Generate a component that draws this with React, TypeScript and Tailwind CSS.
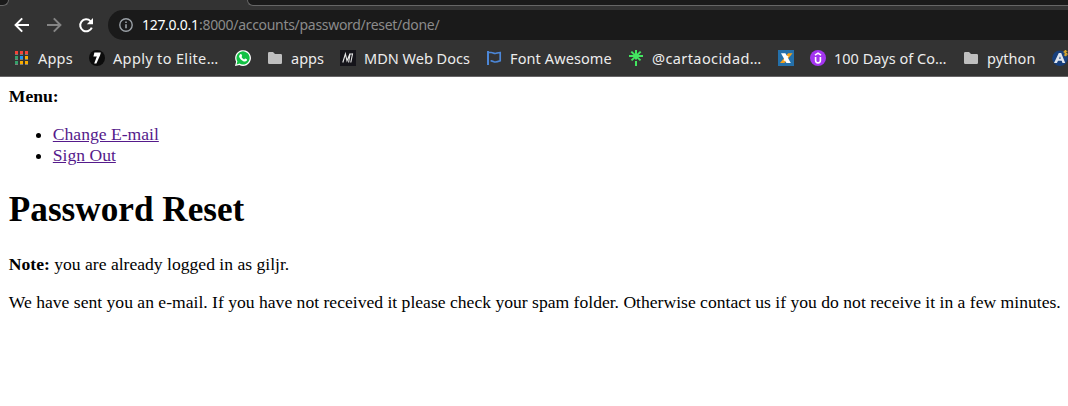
import type { ReactNode } from "react";

function Apps() {
  const colors = [
    ["#f44336", "#f44336", "#f44336"],
    ["#34a06a", "#2196f3", "#f9ab00"],
    ["#34a06a", "#f9ab00", "#f9ab00"],
  ];
  return (
    <svg className="block h-4 w-4" viewBox="0 0 16 16" shapeRendering="crispEdges">
      {colors.map((row, r) =>
        row.map((c, i) => (
          <g key={`${r}-${i}`}>
            <rect x={1 + i * 5} y={1 + r * 5} width="3" height="3" fill={c} />
            <rect x={1 + i * 5} y={4 + r * 5} width="3" height="1" fill="#9a9a9a" opacity="0.7" />
          </g>
        )),
      )}
    </svg>
  );
}

function Folder() {
  return (
    <svg className="block h-4 w-4" viewBox="0 0 16 16">
      <path d="M1 3.2Q1 2 2.2 2H6l2 2h5.8Q15 4 15 5.2v7.6q0 1.2-1.2 1.2H2.2Q1 14 1 12.8z" fill="#bfbfbf" />
    </svg>
  );
}

function Toptal() {
  return (
    <svg className="block h-4 w-4" viewBox="0 0 16 16">
      <circle cx="8" cy="8" r="8" fill="#0c0c0c" />
      <path d="M5.4 2.6h6.4L11 5.6 7.4 13.6H5.2l2.6-7H4.4z" fill="#fff" />
    </svg>
  );
}

function WhatsApp() {
  return (
    <svg className="block h-4 w-4" viewBox="0 0 16 16">
      <path d="M0 16l1.1-4.2A7.9 7.9 0 1 1 4.3 15z" fill="#fff" />
      <path d="M1.6 14.4l.8-3A6.6 6.6 0 1 1 4.6 13.6z" fill="#12c144" />
      <path d="M5.3 4.2c.5-.4 1-.2 1.2.2l.6 1.4c.1.3-.1.7-.6 1.2.7 1.2 1.5 1.9 2.7 2.4.6-.7.8-1 1.2-.8l1.4.7c.4.2.2 1-.1 1.5-.6.8-1.8 1-2.9.6-2.4-.9-3.9-2.5-4.6-4.4-.3-1 .3-2.2 1.1-2.8z" fill="#fff" />
    </svg>
  );
}

function Mdn() {
  return (
    <svg className="block h-4 w-4" viewBox="0 0 16 16">
      <rect width="16" height="16" fill="#15141a" />
      <path d="M2.8 12.5L5.4 3.8 7 10.8 10 3.8 8.6 12.5M12.6 3.5L10.8 12.5" fill="none" stroke="#e8e8e8" strokeWidth="1.1" />
      <path d="M9.6 4h3" stroke="#e8e8e8" strokeWidth="1" />
    </svg>
  );
}

function Flag() {
  return (
    <svg className="block h-4 w-4" viewBox="0 0 16 16" fill="none" stroke="#4c87d8">
      <path d="M2 1v14" strokeWidth="2" />
      <path d="M2 2.5h3.2c1.8 0 2.2 1 4 1 1.7 0 2.5-1 5-1v8.3c-2 .8-3 1.2-4.8 1.2-1.8 0-2.4-1.2-4.2-1.2H4.6" strokeWidth="1.7" />
    </svg>
  );
}

function Linktree() {
  return (
    <svg className="block h-4 w-4" viewBox="0 0 16 16">
      <path d="M8 0v9.5M1 6h14M3.3 1.6l9.2 8.8M12.7 1.6l-9.2 8.8M8 11v5" fill="none" stroke="#43e660" strokeWidth="2" />
    </svg>
  );
}

function CrossMark() {
  return (
    <svg className="block h-4 w-4" viewBox="0 0 16 16">
      <rect width="16" height="16" fill="#2470aa" />
      <path d="M10.2 3.2h4.4L6.4 13H2z" fill="#f5a11c" />
      <path d="M3 3.2h4.4l5.4 9.8H8.4z" fill="#fff" />
      <path d="M7.4 6.2l3.4-.2-4.4 5.1-.8-.3z" fill="#fff" />
    </svg>
  );
}

function Udemy() {
  return (
    <svg className="block h-4 w-4" viewBox="0 0 16 16">
      <circle cx="8" cy="8" r="8" fill="#a435f0" />
      <path d="M5 5.2L8 3.2l3 2M5.6 6.9v3.7q0 2.3 2.4 2.3t2.4-2.3V6.9" fill="none" stroke="#fff" strokeWidth="1.6" />
    </svg>
  );
}

function Coin() {
  return (
    <svg className="block h-4 w-4" viewBox="0 0 16 16">
      <circle cx="8" cy="8.2" r="7.8" fill="#173f7c" />
      <path d="M2 13L6.8 3h2.4l4 10h-2.7l-.8-2.2H6L4.9 13z" fill="#dfe5ee" />
      <path d="M7 8.7l1-2.5.8 2.5z" fill="#173f7c" />
      <path d="M15.3 1.5c-2-.9-3.5-.3-3.2.8.3 1.1 2.7.6 3 1.8.2 1.1-1.5 1.6-3.1.7M13.6 0v6.3" fill="none" stroke="#d8a52c" strokeWidth="1.1" />
    </svg>
  );
}

function Bookmark({ icon, label, text }: { icon: ReactNode; label?: string; text?: string }) {
  return (
    <div className="flex shrink-0 items-center gap-2">
      <span className="h-4 w-4 shrink-0">{icon}</span>
      {label && <span className={`mb-px h-5 shrink-0 leading-5 whitespace-nowrap ${text}`}>{label}</span>}
    </div>
  );
}

function Toolbar() {
  return (
    <div className="flex h-[35px] items-start pt-1">
      <div className="flex h-[30px] w-[108px] shrink-0 items-center pl-[14px]">
        <svg className="h-4 w-4" viewBox="0 0 16 16" fill="none" stroke="#fff" strokeWidth="2">
          <path d="M15 8H2.4M8.2 1.4L1.6 8l6.6 6.6" />
        </svg>
        <svg className="ml-4 h-4 w-4" viewBox="0 0 16 16" fill="none" stroke="#858585" strokeWidth="2">
          <path d="M1 8h12.6M7.8 1.4L14.4 8l-6.6 6.6" />
        </svg>
        <svg className="ml-4 h-4 w-4" viewBox="0 0 16 16">
          <path d="M13.8 10.6A6 6 0 1 1 12.5 4.1" fill="none" stroke="#fff" strokeWidth="2" />
          <path d="M15 1v6.2H8.8z" fill="#fff" />
        </svg>
      </div>
      <div className="flex h-[30px] flex-1 items-center rounded-l-full bg-[#1a1a1a] pl-[10px]">
        <svg className="h-4 w-4" viewBox="0 0 16 16" fill="none" stroke="#9aa0a6" strokeWidth="1.4">
          <circle cx="8" cy="8" r="6.2" />
          <path d="M8 7.2v4M8 4.5v1.5" strokeWidth="1.6" />
        </svg>
        <div className="ml-2 flex h-5 text-[14px] leading-5 whitespace-nowrap text-[#8b8b8b]">
          <span className="w-[57px] tracking-[-0.3px] text-white">127.0.0.1</span>
          <span className="tracking-[-0.3px]">:8000/accounts/password/reset/done/</span>
        </div>
      </div>
    </div>
  );
}

function Bookmarks() {
  return (
    <div className="flex h-[34px] gap-4 overflow-hidden pl-[14px] text-[14.5px] text-[#ececec]">
      <Bookmark icon={<Apps />} label="Apps" text="w-[35px] tracking-[0.2px]" />
      <Bookmark icon={<Toptal />} label="Apply to Elite…" text="w-[106px] tracking-[0.35px]" />
      <Bookmark icon={<WhatsApp />} />
      <Bookmark icon={<Folder />} label="apps" text="w-[33px]" />
      <Bookmark icon={<Mdn />} label="MDN Web Docs" text="w-[106px]" />
      <Bookmark icon={<Flag />} label="Font Awesome" text="w-[102px] tracking-[0.1px]" />
      <Bookmark icon={<Linktree />} label="@cartaocidad…" text="w-[110px] tracking-[0.4px]" />
      <Bookmark icon={<CrossMark />} />
      <Bookmark icon={<Udemy />} label="100 Days of Co…" text="w-[113px]" />
      <Bookmark icon={<Folder />} label="python" text="w-[49px] tracking-[0.1px]" />
      <Bookmark icon={<Coin />} />
    </div>
  );
}

export default function App() {
  return (
    <div className="flex h-[406px] w-[1068px] flex-col overflow-hidden bg-white">
      <header className="h-[77px] shrink-0 border-b border-[#666466] bg-[#333333] font-['Noto_Sans',sans-serif]">
        <div className="flex h-1.5 justify-between">
          <div className="h-1.5 w-[9px] rounded-br-[8px] border-r border-b border-[#666] bg-[#1a1a1a]" />
          <div className="h-1.5 w-[821px] rounded-bl-[8px] border-b border-l border-[#666] bg-[#1a1a1a]" />
        </div>
        <Toolbar />
        <Bookmarks />
      </header>
      <main className="px-[8.8px] pt-[8.8px] font-['Liberation_Serif',serif] text-[17.6px] leading-[21px] text-black">
        <strong className="block font-bold">Menu:</strong>
        <ul className="mt-[17.6px] list-disc pl-[44px]">
          <li>
            <a className="text-[#551a8b] underline">Change E-mail</a>
          </li>
          <li>
            <a className="text-[#551a8b] underline">Sign Out</a>
          </li>
        </ul>
        <h1 className="mt-[23.6px] text-[35.2px] leading-[40px] font-bold">Password Reset</h1>
        <p className="mt-[23.6px]">
          <strong className="font-bold">Note:</strong> you are already logged in as giljr.
        </p>
        <p className="mt-[17.6px] whitespace-nowrap">
          We have sent you an e-mail. If you have not received it please check your spam folder. Otherwise contact us if you do not receive it in a few minutes.
        </p>
      </main>
    </div>
  );
}
